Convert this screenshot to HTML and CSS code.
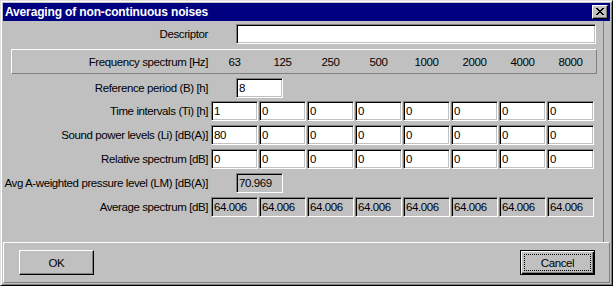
FILE: index.html
```html
<!DOCTYPE html>
<html>
	<head>
		<meta charset="utf-8" />
		<title>Averaging of non-continuous noises</title>
		<link rel="stylesheet" href="styles.css">
	</head>
	<body>
		<div class="window">
			<div class="titlebar">
				<span class="title">Averaging of non-continuous noises</span>
				<div class="close">
					<svg width="8" height="7" viewBox="0 0 8 7" shape-rendering="crispEdges">
						<path d="M0 0h2v1h-2z M6 0h2v1h-2z M1 1h2v1h-2z M5 1h2v1h-2z M2 2h4v1h-4z M3 3h2v1h-2z M2 4h4v1h-4z M1 5h2v1h-2z M5 5h2v1h-2z M0 6h2v1h-2z M6 6h2v1h-2z" fill="#000"/>
					</svg>
				</div>
			</div>
			<div class="client">
				<div class="form">
					<div class="row first">
						<div class="label">Descriptor</div>
						<input class="field wide" type="text" value="">
					</div>
					<div class="group">
						<div class="glabel">Frequency spectrum [Hz]</div>
						<div class="cells">
							<span class="freq">63</span>
							<span class="freq">125</span>
							<span class="freq">250</span>
							<span class="freq">500</span>
							<span class="freq">1000</span>
							<span class="freq">2000</span>
							<span class="freq">4000</span>
							<span class="freq">8000</span>
						</div>
					</div>
					<div class="row ref">
						<div class="label">Reference period (B) [h]</div>
						<input class="field single" type="text" value="8">
					</div>
					<div class="row tight">
						<div class="label">Time intervals (Ti) [h]</div>
						<div class="cells">
							<input class="field" type="text" value="1">
							<input class="field" type="text" value="0">
							<input class="field" type="text" value="0">
							<input class="field" type="text" value="0">
							<input class="field" type="text" value="0">
							<input class="field" type="text" value="0">
							<input class="field" type="text" value="0">
							<input class="field" type="text" value="0">
						</div>
					</div>
					<div class="row">
						<div class="label">Sound power levels (Li) [dB(A)]</div>
						<div class="cells">
							<input class="field" type="text" value="80">
							<input class="field" type="text" value="0">
							<input class="field" type="text" value="0">
							<input class="field" type="text" value="0">
							<input class="field" type="text" value="0">
							<input class="field" type="text" value="0">
							<input class="field" type="text" value="0">
							<input class="field" type="text" value="0">
						</div>
					</div>
					<div class="row">
						<div class="label">Relative spectrum [dB]</div>
						<div class="cells">
							<input class="field" type="text" value="0">
							<input class="field" type="text" value="0">
							<input class="field" type="text" value="0">
							<input class="field" type="text" value="0">
							<input class="field" type="text" value="0">
							<input class="field" type="text" value="0">
							<input class="field" type="text" value="0">
							<input class="field" type="text" value="0">
						</div>
					</div>
					<div class="row">
						<div class="label">Avg A-weighted pressure level (LM) [dB(A)]</div>
						<input class="field single ro" type="text" value="70.969" readonly>
					</div>
					<div class="row">
						<div class="label">Average spectrum [dB]</div>
						<div class="cells">
							<input class="field ro" type="text" value="64.006" readonly>
							<input class="field ro" type="text" value="64.006" readonly>
							<input class="field ro" type="text" value="64.006" readonly>
							<input class="field ro" type="text" value="64.006" readonly>
							<input class="field ro" type="text" value="64.006" readonly>
							<input class="field ro" type="text" value="64.006" readonly>
							<input class="field ro" type="text" value="64.006" readonly>
							<input class="field ro" type="text" value="64.006" readonly>
						</div>
					</div>
				</div>
				<div class="footer">
					<button class="btn ok">OK</button>
					<button class="btn default"><span class="focus">Cancel</span></button>
				</div>
			</div>
		</div>
	</body>
</html>
```

FILE: styles.css
```css
*{
	margin: 0;
	padding: 0;
}
body{
	background-color: #c0c0c0;
	font-family: "Liberation Sans", Arial, sans-serif;
	font-size: 11.5px;
	letter-spacing: -0.4px;
	color: #000;
}
.window{
	width: 613px;
	height: 286px;
	box-sizing: border-box;
	background-color: #c0c0c0;
	border: 1px solid;
	border-color: #dfdfdf #000 #000 #dfdfdf;
	box-shadow: inset 1px 1px #fff, inset -1px -1px #808080;
	padding: 2px;
	display: flex;
	flex-direction: column;
}
.titlebar{
	height: 18px;
	background-color: #000080;
	display: flex;
	align-items: center;
	justify-content: space-between;
	padding-left: 2px;
}
.title{
	color: #fff;
	font-weight: bold;
	font-size: 12px;
	letter-spacing: -0.15px;
}
.close{
	width: 16px;
	height: 14px;
	box-sizing: border-box;
	margin-right: 2px;
	background-color: #c0c0c0;
	border: 1px solid;
	border-color: #fff #000 #000 #fff;
	box-shadow: inset -1px -1px #808080;
	display: flex;
	align-items: center;
	justify-content: center;
	padding-right: 1px;
	padding-bottom: 1px;
}
.close svg{
	display: block;
}
.client{
	flex: 1;
	display: flex;
	flex-direction: column;
}
.form{
	height: 221px;
	width: 601px;
	border-right: 1px solid #808080;
	padding-top: 3px;
	box-sizing: border-box;
}
.row{
	display: flex;
	align-items: center;
	height: 20px;
	margin-top: 4px;
}
.row.first{
	margin-top: 0;
}
.row.tight{
	margin-top: 3px;
}
.label{
	width: 205px;
	margin-right: 3px;
	text-align: right;
	white-space: nowrap;
}
.cells{
	display: flex;
	gap: 1px;
}
.field{
	width: 47px;
	height: 20px;
	box-sizing: border-box;
	border: 1px solid;
	border-color: #808080 #fff #fff #808080;
	box-shadow: inset 1px 1px #000, inset -1px -1px #c0c0c0;
	background-color: #fff;
	padding: 0 0 0 2px;
	font-family: "Liberation Sans", Arial, sans-serif;
	font-size: 11.5px;
	letter-spacing: -0.4px;
	color: #000;
	outline: none;
}
.field.ro{
	background-color: #c0c0c0;
}
.field.single{
	margin-left: 25px;
}
.field.wide{
	margin-left: 25px;
	width: 360px;
}
.group{
	margin-top: 5px;
	margin-left: 8px;
	width: 586px;
	height: 25px;
	box-sizing: border-box;
	border: 1px solid;
	border-color: #fff #808080 #808080 #fff;
	display: flex;
	align-items: center;
}
.glabel{
	width: 196px;
	margin-right: 3px;
	text-align: right;
	white-space: nowrap;
}
.freq{
	width: 47px;
	text-align: center;
}
.footer{
	flex: 1;
	border: 1px solid;
	border-color: #fff #808080 #808080 #fff;
	display: flex;
	justify-content: space-between;
	align-items: flex-start;
	padding: 7px 14px 0 15px;
}
.btn{
	width: 75px;
	height: 25px;
	box-sizing: border-box;
	background-color: #c0c0c0;
	font-family: "Liberation Sans", Arial, sans-serif;
	font-size: 11.5px;
	letter-spacing: -0.4px;
	color: #000;
	border: 1px solid;
	border-color: #fff #000 #000 #fff;
	box-shadow: inset -1px -1px #808080;
}
.btn.default{
	border-color: #000;
	box-shadow: inset 1px 1px #fff, inset -1px -1px #000, inset -2px -2px #808080;
	padding: 3px;
	display: flex;
}
.focus{
	flex: 1;
	border: 1px dotted #000;
	display: flex;
	align-items: center;
	justify-content: center;
}
```
